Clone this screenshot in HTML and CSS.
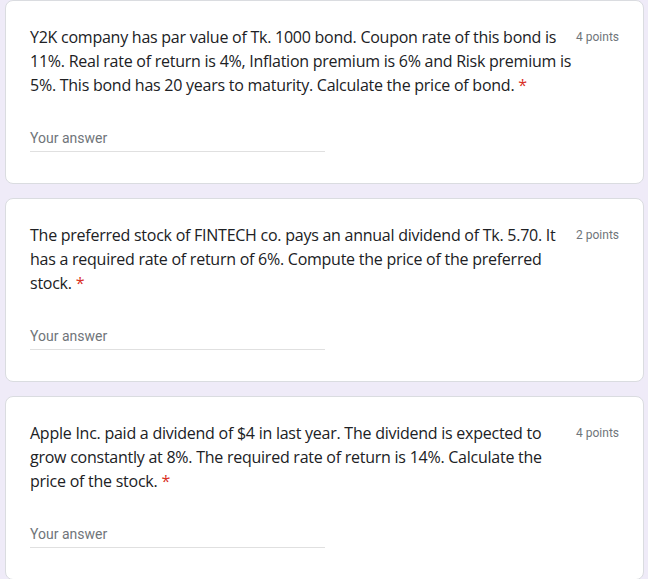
FILE: index.html
```html
<!DOCTYPE html>
<html lang="en">
<head>
<meta charset="utf-8">
<title>Questions</title>
<link rel="stylesheet" href="styles.css">
</head>
<body>
<main class="form">
  <section class="card">
    <div class="head">
      <div class="question">Y2K company has par value of Tk. 1000 bond. Coupon rate of this bond is 11%. Real rate of return is 4%, Inflation premium is 6% and Risk premium is 5%. This bond has 20 years to maturity. Calculate the price of bond. <span class="req">*</span></div>
      <div class="points">4 points</div>
    </div>
    <div class="answer">Your answer</div>
  </section>
  <section class="card">
    <div class="head">
      <div class="question">The preferred stock of FINTECH co. pays an annual dividend of Tk. 5.70. It has a required rate of return of 6%. Compute the price of the preferred stock. <span class="req">*</span></div>
      <div class="points">2 points</div>
    </div>
    <div class="answer">Your answer</div>
  </section>
  <section class="card">
    <div class="head">
      <div class="question">Apple Inc. paid a dividend of $4 in last year. The dividend is expected to grow constantly at 8%. The required rate of return is 14%. Calculate the price of the stock. <span class="req">*</span></div>
      <div class="points">4 points</div>
    </div>
    <div class="answer">Your answer</div>
  </section>
</main>
</body>
</html>
```
FILE: styles.css
```css
html, body {
  margin: 0;
  padding: 0;
  background: #efebf8;
}
body {
  height: 579px;
  overflow: hidden;
}
.form {
  display: flex;
  flex-direction: column;
  gap: 14px;
  padding: 0 4px 0 5px;
}
.card {
  background: #fff;
  border: 1px solid #dadce0;
  border-radius: 8px;
  padding: 24px 24px 31px 24px;
}
.head {
  display: flex;
  align-items: flex-start;
}
.question {
  flex: 1;
  font-family: "Open Sans", Roboto, sans-serif;
  font-size: 16px;
  line-height: 24px;
  color: #202124;
  letter-spacing: -0.25px;
}
.req {
  color: #d93025;
}
.points {
  margin-left: 1px;
  font-family: Roboto, "Liberation Sans", sans-serif;
  font-size: 12px;
  line-height: 24px;
  color: #70757a;
  white-space: nowrap;
}
.answer {
  width: 50%;
  margin-top: 31px;
  padding-bottom: 3px;
  border-bottom: 1px solid #e0e0e0;
  font-family: Roboto, "Liberation Sans", sans-serif;
  font-size: 14px;
  line-height: 20px;
  color: #70757a;
}
```
